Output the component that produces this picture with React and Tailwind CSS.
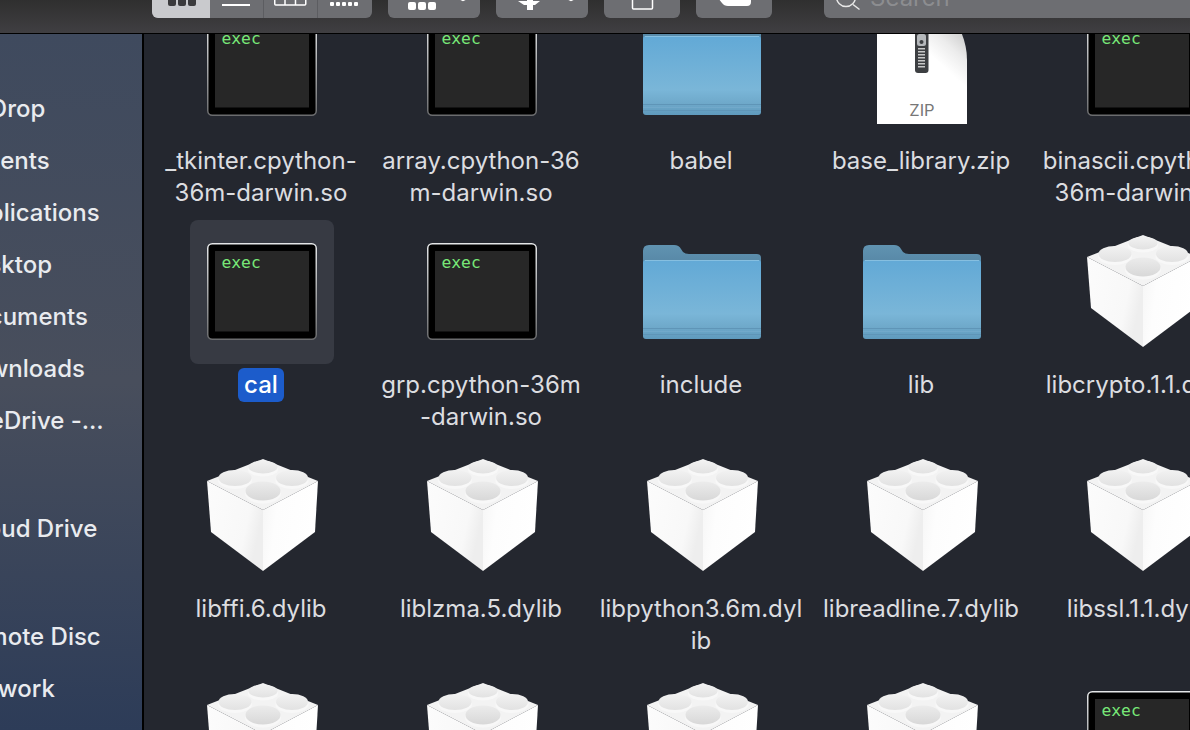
import React from 'react';

const sidebarItems = [
  'AirDrop',
  'Recents',
  'Applications',
  'Desktop',
  'Documents',
  'Downloads',
  'OneDrive -…',
  '',
  'iCloud Drive',
  '',
  'Remote Disc',
  'Network',
];

const files = [
  { type: 'exec', lines: ['_tkinter.cpython-', '36m-darwin.so'] },
  { type: 'exec', lines: ['array.cpython-36', 'm-darwin.so'] },
  { type: 'folder', lines: ['babel'] },
  { type: 'zip', lines: ['base_library.zip'] },
  { type: 'exec', lines: ['binascii.cpython-', '36m-darwin.so'] },
  { type: 'exec', lines: ['cal'], selected: true },
  { type: 'exec', lines: ['grp.cpython-36m', '-darwin.so'] },
  { type: 'folder', lines: ['include'] },
  { type: 'folder', lines: ['lib'] },
  { type: 'lego', lines: ['libcrypto.1.1.dylib'] },
  { type: 'lego', lines: ['libffi.6.dylib'] },
  { type: 'lego', lines: ['liblzma.5.dylib'] },
  { type: 'lego', lines: ['libpython3.6m.dyl', 'ib'] },
  { type: 'lego', lines: ['libreadline.7.dylib'] },
  { type: 'lego', lines: ['libssl.1.1.dylib'] },
  { type: 'lego', lines: [] },
  { type: 'lego', lines: [] },
  { type: 'lego', lines: [] },
  { type: 'lego', lines: [] },
  { type: 'exec', lines: [] },
];

const ExecIcon = () => (
  <svg viewBox="0 0 144 144" className="w-full h-full">
    <defs>
      <linearGradient id="execEdge" x1="0" y1="0" x2="0" y2="1">
        <stop offset="0" stopColor="#e4e6e8" />
        <stop offset="1" stopColor="#6b6c6e" />
      </linearGradient>
    </defs>
    <rect x="17.75" y="23.75" width="108.5" height="95.5" rx="4.5" fill="#000" stroke="url(#execEdge)" strokeWidth="1.5" />
    <rect x="25" y="31" width="94" height="80.5" fill="#272727" />
    <text x="31.5" y="48" fontFamily="'DejaVu Sans Mono', monospace" fontSize="16.3" fill="#78e878">exec</text>
  </svg>
);

const FolderIcon = () => (
  <svg viewBox="0 0 144 144" className="w-full h-full">
    <defs>
      <linearGradient id="folderFront" x1="0" y1="0" x2="0" y2="1">
        <stop offset="0" stopColor="#62a9d6" />
        <stop offset="0.68" stopColor="#7ab6d8" />
        <stop offset="0.86" stopColor="#6ea8c9" />
        <stop offset="1" stopColor="#5f9abd" />
      </linearGradient>
      <linearGradient id="folderBack" x1="0" y1="0" x2="0" y2="1">
        <stop offset="0" stopColor="#6093b1" />
        <stop offset="1" stopColor="#4f7d9c" />
      </linearGradient>
    </defs>
    <path
      d="M13 31 Q13 25 19 25 H44 Q49 25 51 29 L53 32 Q55 34 59 34 H127 Q131 34 131 38 V60 H13 Z"
      fill="url(#folderBack)"
    />
    <rect x="13" y="40" width="118" height="79" rx="3" fill="url(#folderFront)" />
    <rect x="15" y="40" width="114" height="1" fill="#86bfe0" />
    <rect x="13" y="108" width="118" height="1" fill="#5f95b7" />
    <rect x="13" y="111" width="118" height="1" fill="#72a9ca" />
    <rect x="13" y="114" width="118" height="1" fill="#5f95b7" />
  </svg>
);

const ZipIcon = () => (
  <svg viewBox="0 0 144 144" className="w-full h-full">
    <defs>
      <linearGradient id="zipFold" gradientUnits="userSpaceOnUse" x1="108" y1="36" x2="84" y2="62">
        <stop offset="0" stopColor="#d2d2d2" />
        <stop offset="0.45" stopColor="#ececec" />
        <stop offset="1" stopColor="#ffffff" />
      </linearGradient>
    </defs>
    <path d="M27 8 H92 C104 20 117 40 117 64 V128 H27 Z" fill="url(#zipFold)" />
    <rect x="65" y="8" width="13.5" height="69" rx="3" fill="#3d3f42" />
    <rect x="67" y="38" width="9" height="12" rx="2.5" fill="#b5b8bb" />
    <circle cx="71.5" cy="46" r="2" fill="#3d3f42" />
    {[52, 55, 58, 61, 64, 67, 70].map((y) => (
      <rect key={y} x="68" y={y} width="7" height="1.5" fill="#c8c8c8" />
    ))}
    <text x="72" y="120" textAnchor="middle" fontFamily="Inter, sans-serif" fontSize="16.5" fill="#777">ZIP</text>
  </svg>
);

const Stud = ({ cx, cy, rx, ry, id }) => (
  <g>
    <ellipse cx={cx} cy={cy + 2.5} rx={rx} ry={ry} fill="#f8f8f8" />
    <ellipse cx={cx} cy={cy} rx={rx - 0.5} ry={ry - 0.5} fill={`url(#${id})`} />
  </g>
);

const LegoIcon = () => (
  <svg viewBox="0 0 144 144" className="w-full h-full">
    <defs>
      <linearGradient id="legoLeft" x1="0" y1="0" x2="1" y2="0.35">
        <stop offset="0" stopColor="#fcfcfc" />
        <stop offset="0.78" stopColor="#f8f8f8" />
        <stop offset="1" stopColor="#eeeeee" />
      </linearGradient>
      <linearGradient id="legoRight" x1="0" y1="0" x2="1" y2="0.2">
        <stop offset="0" stopColor="#f5f5f5" />
        <stop offset="0.3" stopColor="#fdfdfd" />
        <stop offset="1" stopColor="#ffffff" />
      </linearGradient>
      <linearGradient id="studTop" x1="0" y1="0" x2="0" y2="1">
        <stop offset="0" stopColor="#f2f2f2" />
        <stop offset="1" stopColor="#e2e2e2" />
      </linearGradient>
      <linearGradient id="studFront" x1="0" y1="0" x2="0" y2="1">
        <stop offset="0" stopColor="#ececec" />
        <stop offset="1" stopColor="#d8d8d8" />
      </linearGradient>
    </defs>
    <path d="M73 15 L128 37 L73 66 L17 37 Z" fill="#f3f3f3" />
    <path d="M17 37 L73 66 V127 L21 88 Z" fill="url(#legoLeft)" />
    <path d="M128 37 L73 66 V127 L125 88 Z" fill="url(#legoRight)" />
    <Stud cx={73} cy={23} rx={15} ry={7} id="studTop" />
    <Stud cx={45} cy={34} rx={17} ry={8.5} id="studTop" />
    <Stud cx={102} cy={34} rx={16.5} ry={8.5} id="studTop" />
    <Stud cx={73} cy={47} rx={18} ry={10} id="studFront" />
  </svg>
);

const icons = { exec: ExecIcon, folder: FolderIcon, zip: ZipIcon, lego: LegoIcon };

const FileCell = ({ file }) => {
  const Icon = icons[file.type];

  return (
    <div className="flex flex-col items-center">
      <div className={`w-[144px] h-[144px] shrink-0 rounded-lg ${file.selected ? 'bg-[#373a43]' : ''}`}>
        <Icon />
      </div>
      {file.selected ? (
        <div className="mt-1 -ml-0.5 h-[34px] px-1.5 rounded-md bg-[#1c5ccb] text-white font-medium leading-[34px]">
          {file.lines[0]}
        </div>
      ) : (
        <div className="mt-[5px] -ml-0.5 text-center leading-8 whitespace-nowrap text-[#dcdde0]">
          {file.lines.map((line) => (
            <div key={line}>{line}</div>
          ))}
        </div>
      )}
    </div>
  );
};

const ToolButton = ({ className, children }) => (
  <div className={`h-[30px] shrink-0 overflow-hidden rounded-b-md bg-[#6d6e72] ${className}`}>
    <svg className="w-full h-full" fill="none">
      {children}
    </svg>
  </div>
);

const Toolbar = () => (
  <header className="h-[34px] shrink-0 overflow-hidden border-b border-black bg-gradient-to-b from-[#2f2f2f] to-[#403f42]">
    <div className="-mt-3 pl-[152px] flex gap-4">
      <div className="h-[30px] w-[220px] shrink-0 flex overflow-hidden rounded-b-md bg-[#6d6e72]">
        <div className="w-[58px] bg-[#c9cacd]">
          <svg className="w-full h-full" fill="#3a3a3c">
            <rect x="16" y="8" width="8" height="10" rx="2" />
            <rect x="26" y="8" width="8" height="10" rx="2" />
            <rect x="36" y="8" width="8" height="10" rx="2" />
          </svg>
        </div>
        <div className="w-[54px] border-r border-[#5c5d61]">
          <svg className="w-full h-full" fill="#fff">
            <rect x="12" y="16" width="28" height="2" />
          </svg>
        </div>
        <div className="w-[54px] border-r border-[#5c5d61]">
          <svg className="w-full h-full" fill="none" stroke="#fff" strokeWidth="1.5">
            <rect x="10.75" y="4" width="31" height="13" rx="1" />
            <path d="M21 4 V17 M31.5 4 V17" />
          </svg>
        </div>
        <div className="flex-1">
          <svg className="w-full h-full" fill="#fff">
            {[12, 18, 24, 30, 36].map((x) => (
              <rect key={x} x={x} y="14" width="4" height="4" rx="1" />
            ))}
          </svg>
        </div>
      </div>

      <ToolButton className="w-[92px]">
        <g fill="#fff">
          <rect x="20" y="14" width="8" height="8" rx="2" />
          <rect x="30" y="14" width="8" height="8" rx="2" />
          <rect x="40" y="14" width="8" height="8" rx="2" />
        </g>
        <path d="M70 10 L75 12.5 L80 10" stroke="#fff" strokeWidth="1.5" />
      </ToolButton>

      <ToolButton className="w-[92px]">
        <path
          d="M22 13 H31 V9 H37 V13 H44 L39 17 H37 V22 H31 V17 H28 Z"
          fill="#fff"
        />
        <path d="M70 10 L75 12.5 L80 10" stroke="#fff" strokeWidth="1.5" />
      </ToolButton>

      <ToolButton className="w-[76px]">
        <rect x="28.5" y="4" width="20" height="17" stroke="#fff" strokeWidth="1.5" rx="1" />
      </ToolButton>

      <ToolButton className="w-[76px]">
        <path d="M22 4 H55 V14 Q55 18 51 18 H32 Q28 18 26 15 L22 10 Z" fill="#fff" />
      </ToolButton>

      <div className="ml-9 h-[30px] w-[420px] shrink-0 overflow-hidden rounded-bl-md bg-[#6d6e72] flex items-end">
        <svg className="w-[40px] h-[30px] shrink-0" fill="none" stroke="#e8e8e8" strokeWidth="1.5">
          <circle cx="22" cy="9" r="9.5" />
          <path d="M29 16.5 L35.5 21.5" />
        </svg>
        <span className="ml-[6px] mb-[6px] text-[24px] leading-7 text-[#8c8d90]">Search</span>
      </div>
    </div>
  </header>
);

const App = () => {
  return (
    <div className="h-[730px] w-[1190px] overflow-hidden flex flex-col bg-[#24272f] font-['Inter',sans-serif] text-[24px]">
      <Toolbar />
      <div className="flex-1 min-h-0 flex">
        <aside className="w-[144px] shrink-0 overflow-hidden border-r-2 border-black bg-gradient-to-b from-[#3f4a5e] via-[#484e5c] to-[#2d3c58]">
          <div className="-ml-[43px] pt-[49px] font-medium text-[#e9ebef] whitespace-nowrap">
            {sidebarItems.map((item, i) => (
              <div key={i} className={`leading-[52px] ${item ? 'h-[52px]' : 'h-[56px]'}`}>
                {item}
              </div>
            ))}
          </div>
        </aside>
        <main className="flex-1 min-w-0 overflow-hidden">
          <div className="-mt-[38px] ml-2 grid grid-cols-[repeat(5,220px)] auto-rows-[224px]">
            {files.map((file, i) => (
              <FileCell key={i} file={file} />
            ))}
          </div>
        </main>
      </div>
    </div>
  );
};

export default App;
